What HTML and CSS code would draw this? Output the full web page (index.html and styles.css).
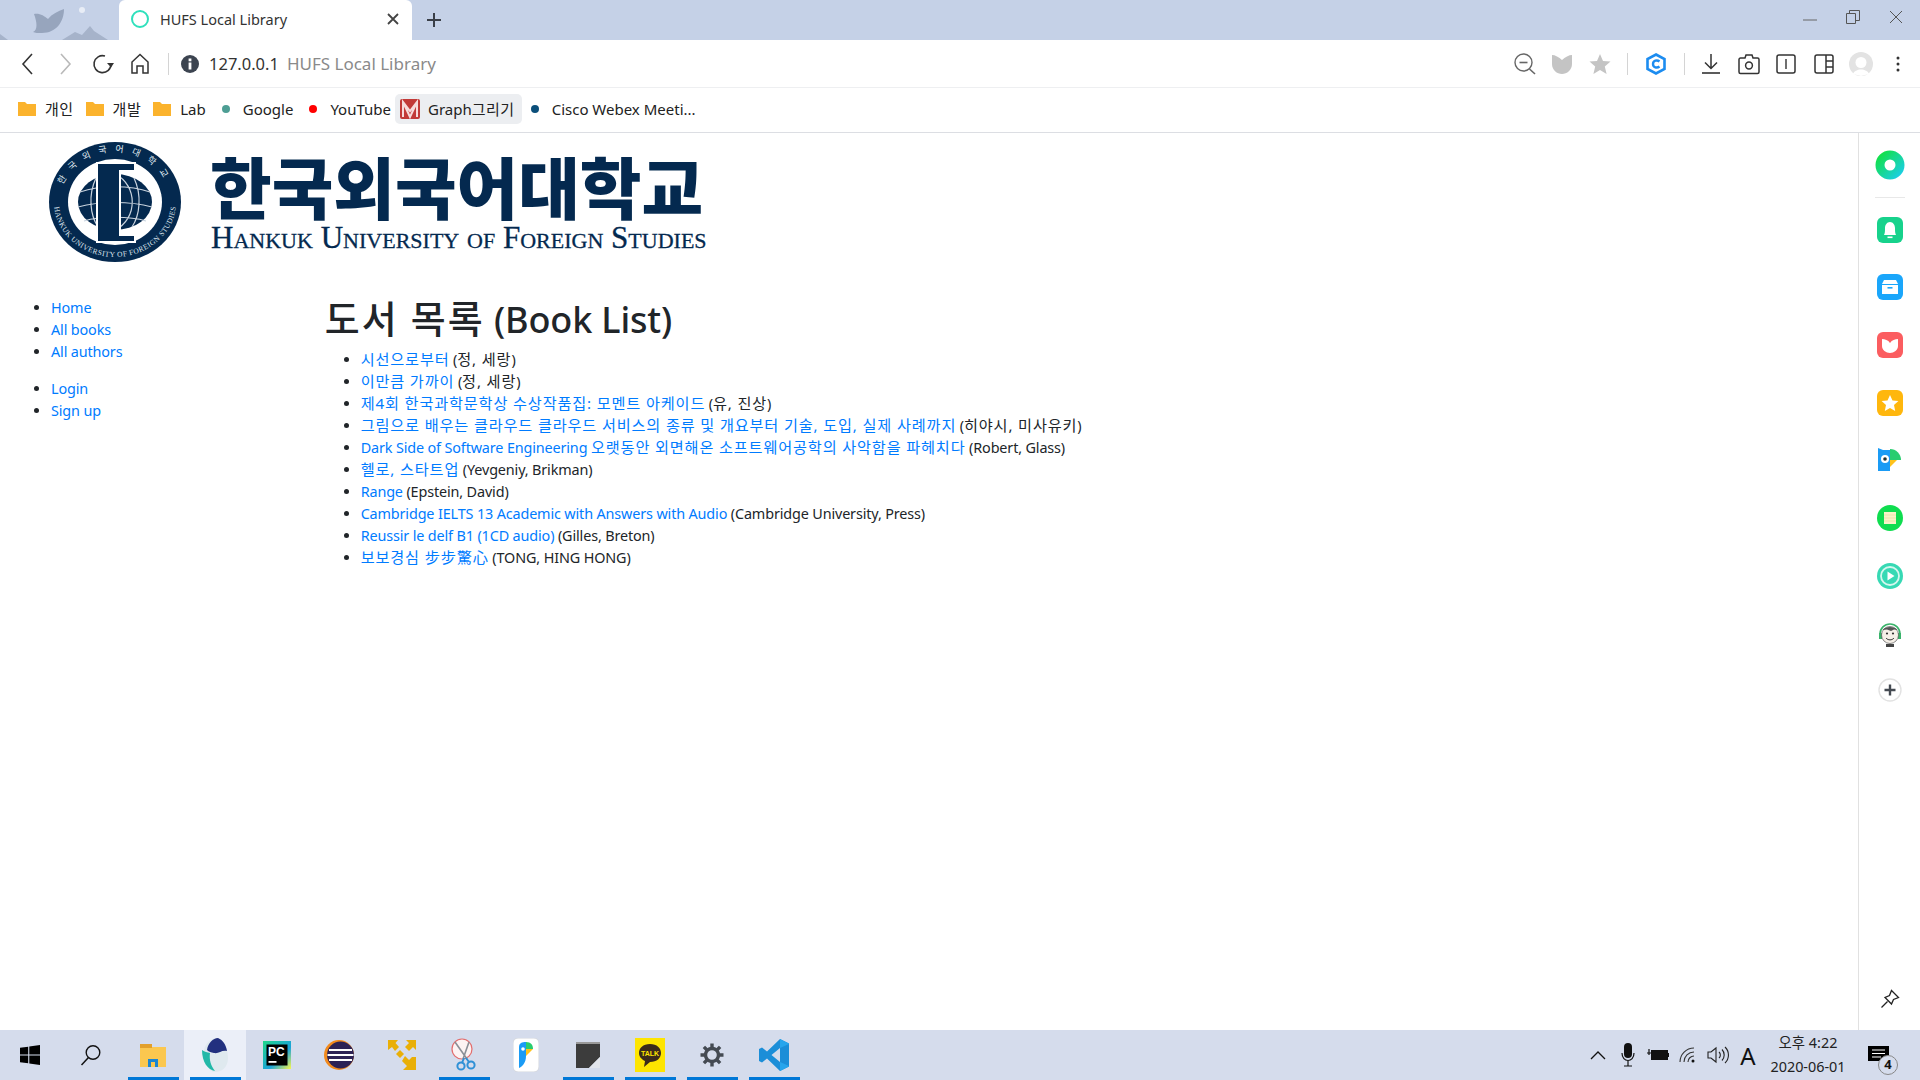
FILE: index.html
```html
<!DOCTYPE html>
<html lang="ko">
<head>
  <meta charset="UTF-8" />
  <title>HUFS Local Library</title>
  <link rel="stylesheet" href="styles.css">
</head>
<body>

  <!-- Title bar -->
  <div class="titlebar">
    <svg class="tab-art" width="119" height="40" viewBox="0 0 119 40">
      <path d="M34 14 C40 13 44 16 48 19 C52 14 58 11 64 9 C64 22 56 33 42 33 C38 33 35 33 33 32 C38 30 37 22 34 14Z" fill="#97a5bd"/>
      <circle cx="82" cy="10" r="3" fill="#e8edf6"/>
      <path d="M62 40 L75 32 L82 35 L90 26 L94 31 L108 40Z" fill="#a6b3ca"/>
      <path d="M0 34 L8 40 L0 40Z" fill="#a6b3ca"/>
    </svg>
    <div class="tab">
      <span class="tab-ring"></span>
      <span class="tab-title">HUFS Local Library</span>
      <svg class="tab-close" width="12" height="12" viewBox="0 0 12 12"><path d="M1 1 L11 11 M11 1 L1 11" stroke="#444" stroke-width="1.8"/></svg>
    </div>
    <svg class="tab-new" width="16" height="16" viewBox="0 0 16 16"><path d="M8 1 V15 M1 8 H15" stroke="#3a3f48" stroke-width="2"/></svg>
    <div class="window-controls">
      <svg width="16" height="16" viewBox="0 0 16 16"><path d="M1 11 H15" stroke="#666" stroke-width="1"/></svg>
      <svg width="16" height="16" viewBox="0 0 16 16"><path d="M1.5 4.5 H10.5 V14.5 H1.5Z M4.5 4 V1.5 H14.5 V11.5 H11" fill="none" stroke="#555" stroke-width="1"/></svg>
      <svg width="16" height="16" viewBox="0 0 16 16"><path d="M2 2 L14 14 M14 2 L2 14" stroke="#555" stroke-width="1"/></svg>
    </div>
  </div>

  <!-- Address bar -->
  <div class="addressbar">
    <div class="tool"><svg width="22" height="24" viewBox="0 0 22 24"><path d="M15 2 L6 12 L15 22" fill="none" stroke="#333" stroke-width="1.6"/></svg></div>
    <div class="tool"><svg width="22" height="24" viewBox="0 0 22 24"><path d="M7 2 L16 12 L7 22" fill="none" stroke="#b9b9b9" stroke-width="1.6"/></svg></div>
    <div class="tool"><svg width="22" height="22" viewBox="0 0 22 22"><path d="M19 11 A8.5 8.5 0 1 1 13 3" fill="none" stroke="#333" stroke-width="1.6"/><path d="M15 10 L22 10 L19 14.5Z" fill="#333"/></svg></div>
    <div class="tool"><svg width="20" height="22" viewBox="0 0 20 22"><path d="M2 20 V9 L10 1.5 L18 9 V20 H13 V13 H7 V20Z" fill="none" stroke="#333" stroke-width="1.5"/></svg></div>
    <span class="tool-sep first-sep"></span>
    <svg class="info-icon" width="18" height="18" viewBox="0 0 18 18"><circle cx="9" cy="9" r="9" fill="#3c4450"/><rect x="7.6" y="7.5" width="2.8" height="7" fill="#fff"/><rect x="7.6" y="3.5" width="2.8" height="2.8" fill="#fff"/></svg>
    <span class="url">127.0.0.1</span>
    <span class="url-title">HUFS Local Library</span>
    <div class="address-right">
      <div class="tool"><svg width="24" height="24" viewBox="0 0 24 24"><circle cx="10.5" cy="10.5" r="8.5" fill="none" stroke="#666" stroke-width="1.4"/><path d="M6.5 10.5 H14.5" stroke="#666" stroke-width="1.6"/><path d="M16.5 17 L22 22" stroke="#666" stroke-width="1.6"/></svg></div>
      <div class="tool"><svg width="22" height="22" viewBox="0 0 22 22"><path d="M1 2 C4 2 8 4 11 7 C14 4 18 2 21 2 V11 C21 17 16 21 11 21 C6 21 1 17 1 11Z" fill="#c4c4c4"/></svg></div>
      <div class="tool"><svg width="22" height="22" viewBox="0 0 22 22"><path d="M11 1 L14 8 L21.5 8.6 L15.8 13.6 L17.6 21 L11 17 L4.4 21 L6.2 13.6 L.5 8.6 L8 8Z" fill="#c4c4c4"/></svg></div>
      <span class="tool-sep sep-before"></span>
      <div class="tool tool-c"><svg width="20" height="22" viewBox="0 0 20 22"><path d="M10 1.5 L18.5 6 V16 L10 20.5 L1.5 16 V6Z" fill="none" stroke="#1c8cf0" stroke-width="2.6"/><path d="M13.5 8.5 C11 6.5 7 7.5 7 11 C7 14.5 11 15.5 13.5 13.5" fill="none" stroke="#1c8cf0" stroke-width="2.4"/></svg></div>
      <span class="tool-sep sep-after"></span>
      <div class="tool"><svg width="20" height="22" viewBox="0 0 20 22"><path d="M10 1 V15 M4 9.5 L10 15.5 L16 9.5" fill="none" stroke="#333" stroke-width="1.5"/><path d="M1 20 H19" stroke="#333" stroke-width="1.6"/></svg></div>
      <div class="tool"><svg width="22" height="22" viewBox="0 0 22 22"><path d="M2.5 5 H7 L8 2 H14 L15 5 H19.5 A1.5 1.5 0 0 1 21 6.5 V19 A1.5 1.5 0 0 1 19.5 20.5 H2.5 A1.5 1.5 0 0 1 1 19 V6.5 A1.5 1.5 0 0 1 2.5 5Z" fill="none" stroke="#333" stroke-width="1.5"/><circle cx="11" cy="12.5" r="3.4" fill="none" stroke="#333" stroke-width="1.5"/></svg></div>
      <div class="tool"><svg width="20" height="20" viewBox="0 0 20 20"><rect x="1" y="1" width="18" height="18" rx="2" fill="none" stroke="#333" stroke-width="1.5"/><path d="M10 5 V15" stroke="#333" stroke-width="1.4"/></svg></div>
      <div class="tool"><svg width="20" height="20" viewBox="0 0 20 20"><rect x="1" y="1" width="18" height="18" rx="2" fill="none" stroke="#333" stroke-width="1.5"/><path d="M12 1 V19 M12 7 H19 M12 13 H19" stroke="#333" stroke-width="1.5"/></svg></div>
      <div class="tool"><svg width="24" height="24" viewBox="0 0 24 24"><circle cx="12" cy="12" r="12" fill="#e3e3e3"/><circle cx="12" cy="10.5" r="5.5" fill="#fff"/><path d="M4 22 C6 16 18 16 20 22 L12 24Z" fill="#fff"/></svg></div>
      <div class="tool tool-dots"><svg width="4" height="18" viewBox="0 0 4 18"><circle cx="2" cy="3" r="1.5" fill="#333"/><circle cx="2" cy="9" r="1.5" fill="#333"/><circle cx="2" cy="15" r="1.5" fill="#333"/></svg></div>
    </div>
  </div>

  <!-- Bookmarks -->
  <div class="bookmarks">
    <div class="bookmark"><svg class="folder" width="18" height="15" viewBox="0 0 18 15"><path d="M0 1 H7 L9 3 H18 V15 H0Z" fill="#fbb32d"/></svg><span class="ko-tab">개인</span></div>
    <div class="bookmark"><svg class="folder" width="18" height="15" viewBox="0 0 18 15"><path d="M0 1 H7 L9 3 H18 V15 H0Z" fill="#fbb32d"/></svg><span class="ko-tab">개발</span></div>
    <div class="bookmark"><svg class="folder" width="18" height="15" viewBox="0 0 18 15"><path d="M0 1 H7 L9 3 H18 V15 H0Z" fill="#fbb32d"/></svg>Lab</div>
    <div class="bookmark bookmark-link"><span class="dot dot-google"></span>Google</div>
    <div class="bookmark bookmark-link"><span class="dot dot-youtube"></span>YouTube</div>
    <div class="bookmark bookmark-active">
      <svg width="20" height="20" viewBox="0 0 20 20"><rect width="20" height="20" rx="2" fill="#c23a38"/><path d="M3 18 V3 L10 12 L17 3 V18 M3 3 L10 18 L17 3" fill="none" stroke="#f6dcdc" stroke-width="2"/></svg>
      <span>Graph<span class="ko-tab">그리기</span></span>
    </div>
    <div class="bookmark bookmark-link"><span class="dot dot-cisco"></span>Cisco Webex Meeti...</div>
  </div>

  <div class="browser-body">
    <div class="page">
      <div class="logo">
        <svg class="seal" width="170" height="135" viewBox="0 0 170 135">
          <defs>
            <path id="sealTop" d="M30 67 A55 50 0 0 1 140 67"/>
            <path id="sealBottom" d="M24 67 A61 55 0 0 0 146 67"/>
          </defs>
          <ellipse cx="85" cy="67" rx="66" ry="60" fill="#04294f"/>
          <ellipse cx="85" cy="67" rx="47" ry="43" fill="#fff"/>
          <ellipse cx="85" cy="67" rx="37" ry="28" fill="#04294f"/>
          <path d="M85 39 C62 50 62 84 85 95 M85 39 C108 50 108 84 85 95 M50 57 C70 50 100 50 120 57 M48 72 C70 66 100 66 122 72 M54 86 C70 81 100 81 116 86 M66 43 C58 60 60 80 68 92 M104 43 C112 60 110 80 102 92" fill="none" stroke="#c9d3de" stroke-width="1.2"/>
          <path d="M67 28 H105 V36 H90 V100 H105 V107 H67Z" fill="#04294f" stroke="#fff" stroke-width="2"/>
          <text class="seal-kr"><textPath href="#sealTop" startOffset="50%" text-anchor="middle">한국외국어대학교</textPath></text>
          <text class="seal-en"><textPath href="#sealBottom" startOffset="50%" text-anchor="middle" textLength="172">HANKUK UNIVERSITY OF FOREIGN STUDIES</textPath></text>
        </svg>
        <div class="wordmark">
          <div class="wordmark-kr">한국외국어대학교</div>
          <div class="wordmark-en">Hankuk University of Foreign Studies</div>
        </div>
      </div>

      <div class="row">
        <div class="side-col">
          <ul>
            <li><a href="#">Home</a></li>
            <li><a href="#">All books</a></li>
            <li><a href="#">All authors</a></li>
          </ul>
          <ul>
            <li><a href="#">Login</a></li>
            <li><a href="#">Sign up</a></li>
          </ul>
        </div>
        <div class="content-col">
          <h1><span class="ko">도서 목록</span> (Book List)</h1>
          <ul>
            <li><a href="#"><span class="ko">시선으로부터</span></a> (<span class="ko">정, 세랑</span>)</li>
            <li><a href="#"><span class="ko">이만큼 가까이</span></a> (<span class="ko">정, 세랑</span>)</li>
            <li><a href="#"><span class="ko">제4회 한국과학문학상 수상작품집: 모멘트 아케이드</span></a> (<span class="ko">유, 진상</span>)</li>
            <li><a href="#"><span class="ko">그림으로 배우는 클라우드 클라우드 서비스의 종류 및 개요부터 기술, 도입, 실제 사례까지</span></a> (<span class="ko">히야시, 미사유키</span>)</li>
            <li><a href="#">Dark Side of Software Engineering <span class="ko">오랫동안 외면해온 소프트웨어공학의 사악함을 파헤치다</span></a> (Robert, Glass)</li>
            <li><a href="#"><span class="ko">헬로, 스타트업</span></a> (Yevgeniy, Brikman)</li>
            <li><a href="#">Range</a> (Epstein, David)</li>
            <li><a href="#">Cambridge IELTS 13 Academic with Answers with Audio</a> (Cambridge University, Press)</li>
            <li><a href="#">Reussir le delf B1 (1CD audio)</a> (Gilles, Breton)</li>
            <li><a href="#"><span class="ko">보보경심 步步驚心</span></a> (TONG, HING HONG)</li>
          </ul>
        </div>
      </div>
    </div>

    <!-- Side rail -->
    <div class="rail">
      <svg class="rail-icon rail-first" width="30" height="30" viewBox="0 0 30 30"><defs><linearGradient id="ringGrad" x1="0" y1="0" x2="1" y2="1"><stop offset="0" stop-color="#12e04a"/><stop offset="1" stop-color="#1bcfe0"/></linearGradient></defs><circle cx="15" cy="15" r="10" fill="none" stroke="url(#ringGrad)" stroke-width="9"/></svg>
      <div class="rail-divider"></div>
      <svg class="rail-icon" width="26" height="26" viewBox="0 0 26 26"><rect width="26" height="26" rx="6" fill="#17d28c"/><path d="M7 18 C8 16 8 14 8 11 C8 8 10 5 13 5 C16 5 18 8 18 11 C18 14 18 16 19 18Z" fill="#fff"/><rect x="10.5" y="19.5" width="5" height="1.6" fill="#fff"/></svg>
      <svg class="rail-icon" width="26" height="26" viewBox="0 0 26 26"><rect width="26" height="26" rx="6" fill="#1aa6fb"/><path d="M7 6 H19 L21 10 H5Z M5 11 H21 V20 H5Z" fill="#fff"/><rect x="10.5" y="13" width="5" height="1.6" fill="#1aa6fb"/></svg>
      <svg class="rail-icon" width="26" height="26" viewBox="0 0 26 26"><rect width="26" height="26" rx="6" fill="#fb5d60"/><path d="M5 7 C8 7 11 8 13 11 C15 8 18 7 21 7 V14 C21 18 17 21 13 21 C9 21 5 18 5 14Z" fill="#fff"/></svg>
      <svg class="rail-icon" width="26" height="26" viewBox="0 0 26 26"><rect width="26" height="26" rx="6" fill="#ffb70d"/><path d="M13 5 L15.5 10.4 L21.4 11 L17 15 L18.2 21 L13 18 L7.8 21 L9 15 L4.6 11 L10.5 10.4Z" fill="#fff"/></svg>
      <svg class="rail-icon" width="26" height="26" viewBox="0 0 26 26"><path d="M1 1 L6 3 H13 V24 H1Z" fill="#1a9bf5"/><path d="M13 2 A11 11 0 0 1 24 13 H13Z" fill="#29cd6f"/><path d="M13 13 H22 A10 10 0 0 1 13 22Z" fill="#fff"/><path d="M13 13 H20 L13 20Z" fill="#ffc21a"/><circle cx="8" cy="12" r="4" fill="#fff"/><circle cx="8" cy="12" r="1.8" fill="#233"/></svg>
      <svg class="rail-icon" width="26" height="26" viewBox="0 0 26 26"><circle cx="13" cy="13" r="13" fill="#0fdd4f"/><rect x="7" y="7" width="12" height="12" fill="#f8f3c8"/><path d="M7 10 H19 M7 13 H19 M7 16 H19" stroke="#e8dfa0" stroke-width=".7"/></svg>
      <svg class="rail-icon" width="26" height="26" viewBox="0 0 26 26"><circle cx="13" cy="13" r="13" fill="#37d9b4"/><circle cx="13" cy="13" r="9" fill="none" stroke="#d5f7ee" stroke-width="1.8"/><path d="M10.5 8.5 L17.5 13 L10.5 17.5Z" fill="#fff"/></svg>
      <svg class="rail-icon" width="26" height="26" viewBox="0 0 26 26"><path d="M3 13 A10 10 0 0 1 23 13" fill="none" stroke="#39b36a" stroke-width="1.6"/><rect x="2" y="12" width="3" height="6" fill="#39b36a"/><rect x="21" y="12" width="3" height="6" fill="#39b36a"/><circle cx="13" cy="14" r="8.5" fill="#f6f0e8" stroke="#555" stroke-width=".7"/><path d="M5.5 9 C8 5 18 5 20.5 9 L17 8.5 L14 10 L10 8.5Z" fill="#555"/><circle cx="10" cy="12.5" r="1.1" fill="#333"/><circle cx="16" cy="12.5" r="1.1" fill="#333"/><path d="M9 17 C11 19.5 15 19.5 17 17" fill="none" stroke="#333"/><path d="M9 23 H17 V26 H9Z" fill="#444"/></svg>
      <svg class="rail-icon" width="24" height="24" viewBox="0 0 24 24"><circle cx="12" cy="12" r="11" fill="#fff" stroke="#e2e2e2" stroke-width="1.4"/><path d="M12 6.5 V17.5 M6.5 12 H17.5" stroke="#444a52" stroke-width="2.4"/></svg>
      <svg class="rail-pin" width="20" height="20" viewBox="0 0 20 20"><path d="M11.5 1.5 L18.5 8.5 L13.5 10.5 L11.5 15 L5 8.5 L9.5 6.5Z M7.5 12.5 L1.5 18.5" fill="none" stroke="#222" stroke-width="1.3"/></svg>
    </div>
  </div>

  <!-- Windows taskbar -->
  <div class="taskbar">
    <div class="task task-start"><svg width="20" height="20" viewBox="0 0 20 20"><path d="M0 2.8 L8.2 1.7 V9.5 H0Z M9.3 1.5 L20 0 V9.5 H9.3Z M0 10.5 H8.2 V18.3 L0 17.2Z M9.3 10.5 H20 V20 L9.3 18.5Z" fill="#000"/></svg></div>
    <div class="task task-search"><svg width="22" height="22" viewBox="0 0 22 22"><circle cx="13" cy="8.5" r="6.8" fill="none" stroke="#111" stroke-width="1.4"/><path d="M8.5 13.5 L1.5 21" stroke="#111" stroke-width="1.5"/></svg></div>
    <div class="task task-open"><svg width="26" height="24" viewBox="0 0 26 24"><path d="M0 1 H10 L12 4 H26 V24 H0Z" fill="#fbc74f"/><rect x="0" y="1" width="12" height="4" fill="#e3a02b"/><path d="M8 24 V16 H18 V24 H15 V19 H11 V24Z" fill="#1c86d1"/></svg></div>
    <div class="task task-open task-active"><svg width="28" height="34" viewBox="0 0 28 34"><path d="M3 16 C2 7 9 0 17 0 C24 3 27 12 27 20 C27 29 21 34 14 34 C8 34 4 26 3 16Z" fill="#dfe9ef"/><path d="M6 12 C7 5 12 0 17 0 C22 2 25 7 26 13 C20 12 18 16 13 15 C10 14 8 14 6 12Z" fill="#22307f"/><path d="M1 12 C4 14 6 14 9 15 C8 22 10 28 14 33 C7 32 1 24 1 12Z" fill="#22b8a8"/></svg></div>
    <div class="task"><svg width="28" height="28" viewBox="0 0 28 28"><defs><linearGradient id="pcGrad" x1="0" y1="0" x2="1" y2="1"><stop offset="0" stop-color="#20d789"/><stop offset=".6" stop-color="#1aa3d9"/><stop offset="1" stop-color="#fcf84a"/></linearGradient></defs><rect width="28" height="28" fill="url(#pcGrad)"/><rect x="3.5" y="3.5" width="21" height="21" fill="#000"/><text class="pc-text" x="5" y="15">PC</text><rect x="5.5" y="20" width="8" height="1.8" fill="#fff"/></svg></div>
    <div class="task"><svg width="30" height="30" viewBox="0 0 30 30"><circle cx="15" cy="15" r="15" fill="#f28a1c"/><circle cx="16.5" cy="15" r="13.5" fill="#2c2255"/><path d="M5 10 H28 M3.5 15 H29.5 M5 20 H28" stroke="#fff" stroke-width="2.2"/></svg></div>
    <div class="task"><svg width="30" height="32" viewBox="0 0 30 32"><path d="M1 1 H11 L8.5 4 L12 8 L8 12 L5 8 L1 11Z M29 1 V11 L26 8 L22 12 L18 8 L22 4 L19 1Z M13 11 L17 15 L13 19 L9 15Z M18 17 L22 21 L25 18 L29 18 V31 H16 L20 27 L15 22Z" fill="#e9af07"/></svg></div>
    <div class="task task-open"><svg width="30" height="34" viewBox="0 0 30 34"><circle cx="13" cy="11" r="10" fill="#fdf3f3" stroke="#e26d6d" stroke-width="1.2"/><path d="M6 4 L18 21 M20 4 L14 21" stroke="#8b8f96" stroke-width="1.6"/><circle cx="12" cy="28" r="3.6" fill="none" stroke="#2e90d6" stroke-width="2"/><circle cx="22" cy="27" r="3.6" fill="none" stroke="#2e90d6" stroke-width="2"/><path d="M15 20 L13 25 M17 20 L20 24" stroke="#2e90d6" stroke-width="2"/></svg></div>
    <div class="task"><svg width="26" height="34" viewBox="0 0 26 34"><rect width="26" height="34" rx="5" fill="#fff" stroke="#d2d6dd"/><path d="M6 30 V9 C6 5 9 4 13 4 V18 C13 24 10 28 6 30Z" fill="#1a9bf5"/><path d="M13 4 C18 4 20 7 20 11 H13Z" fill="#29cd6f"/><path d="M13 11 H20 L13 18Z" fill="#ffc21a"/><circle cx="10" cy="11" r="1.8" fill="#fff"/></svg></div>
    <div class="task task-open"><svg width="24" height="26" viewBox="0 0 24 26"><path d="M0 0 H24 V15 L13 26 H0Z" fill="#3c3c3c"/><path d="M0 0 H24 V2 H0Z" fill="#999"/><path d="M24 15 V26 H13Z" fill="#e2e5ec"/></svg></div>
    <div class="task task-open"><svg width="30" height="34" viewBox="0 0 30 34"><rect width="30" height="34" fill="#fee500"/><path d="M15 6 C8 6 4 10 4 15 C4 19 7 21.5 10 23 L9 29 L15 24 C22 24 26 20 26 15 C26 10 22 6 15 6Z" fill="#3b2b1b"/><text class="talk-text" x="15" y="18" text-anchor="middle">TALK</text></svg></div>
    <div class="task task-open"><svg width="24" height="24" viewBox="0 0 24 24"><circle cx="12" cy="12" r="6.5" fill="none" stroke="#444a52" stroke-width="3.4"/><path d="M12 0.5 V5 M12 19 V23.5 M0.5 12 H5 M19 12 H23.5 M3.9 3.9 L7 7 M17 17 L20.1 20.1 M3.9 20.1 L7 17 M17 7 L20.1 3.9" stroke="#444a52" stroke-width="3.4"/></svg></div>
    <div class="task task-open"><svg width="30" height="32" viewBox="0 0 30 32"><path d="M21 0 L30 4.5 V27.5 L21 32 L8 19.5 L3 23.5 L0 22 V10 L3 8.5 L8 12.5Z M21 9 L12.5 16 L21 23Z" fill="#1b8ed8"/><path d="M21 0 L30 4.5 V27.5 L21 32Z M21 9 V23 L30 27 V5Z" fill="#27a5ec"/></svg></div>

    <div class="tray">
      <div class="tray-item"><svg width="16" height="10" viewBox="0 0 16 10"><path d="M1 9 L8 2 L15 9" fill="none" stroke="#111" stroke-width="1.3"/></svg></div>
      <div class="tray-item"><svg width="14" height="24" viewBox="0 0 14 24"><rect x="3" y="0" width="8" height="15" rx="4" fill="#111"/><path d="M1 10 C1 20 13 20 13 10 M7 18 V23 M3 23 H11" fill="none" stroke="#111" stroke-width="1.2"/></svg></div>
      <div class="tray-item"><svg width="22" height="14" viewBox="0 0 22 14"><rect x="4.5" y="2.5" width="16" height="9" fill="#111" stroke="#111"/><rect x="20.5" y="5" width="1.5" height="4" fill="#111"/><path d="M0 5 H4 M2 1 V7" stroke="#111" stroke-width="1.2"/></svg></div>
      <div class="tray-item"><svg width="18" height="16" viewBox="0 0 18 16"><path d="M1 15 A14 14 0 0 1 15 1 M5 15 A10 10 0 0 1 15 5 M9 15 A6 6 0 0 1 15 9" fill="none" stroke="#333" stroke-width="1.1"/><circle cx="14" cy="14" r="1.5" fill="#111"/></svg></div>
      <div class="tray-item"><svg width="22" height="18" viewBox="0 0 22 18"><path d="M1 6 H4 L9 2 V16 L4 12 H1Z" fill="none" stroke="#222" stroke-width="1.1"/><path d="M12 6 A4 4 0 0 1 12 12 M15 3.5 A8 8 0 0 1 15 14.5 M18 1 A11 11 0 0 1 18 17" fill="none" stroke="#222" stroke-width="1.1"/></svg></div>
      <div class="tray-item tray-ime">A</div>
      <div class="clock">
        <div>오후 4:22</div>
        <div>2020-06-01</div>
      </div>
      <div class="notify">
        <svg width="21" height="18" viewBox="0 0 21 18"><path d="M0 0 H21 V15 H0Z" fill="#000"/><path d="M4 4 H17 M4 7.5 H17 M4 11 H13" stroke="#fff" stroke-width="1.2"/></svg>
        <span class="notify-badge">4</span>
      </div>
    </div>
  </div>

</body>
</html>
```

FILE: styles.css
```css
html, body {
  margin: 0;
  padding: 0;
  height: 100%;
  overflow: hidden;
}

body {
  display: flex;
  flex-direction: column;
  height: 1080px;
  background: #fff;
  font-family: "Noto Sans", "Noto Sans CJK KR", sans-serif;
  color: #212529;
}

svg {
  display: block;
  flex: none;
}

/* Title bar */
.titlebar {
  display: flex;
  align-items: center;
  height: 40px;
  background: #c5d1e7;
  flex: none;
}

.tab {
  display: flex;
  align-items: center;
  width: 293px;
  height: 40px;
  box-sizing: border-box;
  padding: 0 13px 2px 12px;
  background: #fff;
  border-radius: 6px 6px 0 0;
  font-size: 14.5px;
  color: #333;
}

.tab-ring {
  width: 18px;
  height: 18px;
  box-sizing: border-box;
  border: 2.5px solid #2fe0bc;
  border-radius: 50%;
}

.tab-title {
  margin-left: 11px;
  flex: 1;
}

.tab-new {
  margin-left: 14px;
}

.window-controls {
  display: flex;
  gap: 27px;
  margin-left: auto;
  margin-right: 16px;
  margin-top: -7px;
}

/* Address bar */
.addressbar {
  display: flex;
  align-items: center;
  height: 48px;
  padding-left: 9px;
  border-bottom: 1px solid #eeeff1;
  flex: none;
  box-sizing: border-box;
  font-size: 16.5px;
}

.tool {
  display: flex;
  align-items: center;
  justify-content: center;
  width: 37.5px;
  height: 40px;
  flex: none;
}

.tool-sep {
  width: 1px;
  height: 22px;
  background: #d4d4d4;
  flex: none;
}

.first-sep {
  margin: 0 12px 0 9px;
}

.sep-before {
  margin-left: 8px;
}

.sep-after {
  margin-right: 8px;
}

.url {
  margin-left: 10px;
  color: #333;
}

.url-title {
  margin-left: 8px;
  font-size: 17px;
  color: #8a8a8a;
}

.address-right {
  display: flex;
  align-items: center;
  margin-left: auto;
  padding-right: 4px;
}

.tool-c {
  width: 56px;
}

.tool-dots {
  width: 36px;
}

/* Bookmarks */
.bookmarks {
  display: flex;
  align-items: center;
  height: 45px;
  padding: 0 0 3px 18px;
  border-bottom: 1px solid #dcdee3;
  box-sizing: border-box;
  flex: none;
  font-size: 15px;
  color: #222;
}

.ko-tab {
  letter-spacing: .5px;
}

.bookmark {
  display: flex;
  align-items: center;
  gap: 9px;
  margin-right: 12px;
}

.bookmark-link {
  gap: 13px;
  margin-left: 4px;
}

.dot {
  width: 8px;
  height: 8px;
  border-radius: 50%;
}

.dot-google { background: #4d9e94; }
.dot-youtube { background: #f00; }
.dot-cisco { background: #0b4f7a; }

.bookmark-active {
  gap: 8px;
  height: 30px;
  padding: 0 7px 0 5px;
  margin: 0 5px 0 -8px;
  background: #eceef1;
  border-radius: 5px;
}

/* Page */
.browser-body {
  display: flex;
  flex: 1;
  min-height: 0;
}

.page {
  flex: 1;
  min-width: 0;
  font-size: 14.4px;
  line-height: 22px;
  letter-spacing: -.14px;
}

.ko {
  font-size: 1.055em;
  line-height: 1;
  letter-spacing: .055em;
}

.logo {
  display: flex;
  gap: 10px;
  padding: 2px 0 0 30px;
}

.wordmark {
  padding-top: 14px;
  color: #04294f;
}

.wordmark-kr {
  font-family: "Noto Sans CJK KR", sans-serif;
  font-size: 67px;
  font-weight: 900;
  line-height: 72px;
  letter-spacing: 0;
  white-space: nowrap;
}

.wordmark-en {
  margin-left: 1px;
  font-family: "Liberation Serif", serif;
  font-size: 31.1px;
  font-variant: small-caps;
  line-height: 34px;
  letter-spacing: 0;
  white-space: nowrap;
  -webkit-text-stroke: .3px #04294f;
}

.seal-kr {
  font-family: "Noto Sans CJK KR", sans-serif;
  font-size: 9px;
  letter-spacing: 8px;
  fill: #dfe6ee;
}

.seal-en {
  font-family: "Liberation Serif", serif;
  font-size: 7.5px;
  letter-spacing: 0;
  fill: #dfe6ee;
}

.row {
  display: grid;
  grid-template-columns: 2fr 10fr;
  margin-top: 27px;
}

.side-col,
.content-col {
  padding: 0 15px;
}

.row ul {
  margin: 0 0 14.5px;
  padding-left: 36px;
}

.row a {
  color: #007bff;
  text-decoration: none;
}

h1 {
  margin: 1px 0 8px;
  font-size: 36px;
  font-weight: 500;
  line-height: 43px;
}

/* Right rail */
.rail {
  display: flex;
  flex-direction: column;
  align-items: center;
  width: 62px;
  box-sizing: border-box;
  border-left: 1px solid #e1e1e1;
  flex: none;
}

.rail-icon {
  margin-top: 31.7px;
}

.rail-first {
  margin-top: 17px;
}

.rail-divider {
  width: 30px;
  height: 1px;
  margin: 17px 0 -13px;
  background: #e8e8e8;
}

.rail-pin {
  margin-top: auto;
  margin-bottom: 21px;
}

/* Taskbar */
.taskbar {
  display: flex;
  align-items: center;
  height: 50px;
  background: #d5dcec;
  flex: none;
}

.task {
  position: relative;
  display: flex;
  align-items: center;
  justify-content: center;
  width: 62.1px;
  height: 50px;
  flex: none;
}

.task-start {
  width: 60px;
}

.task-open::after {
  content: "";
  position: absolute;
  left: 6px;
  right: 5px;
  bottom: 0;
  height: 3px;
  background: #0078d7;
}

.task-active {
  background: #ebeff8;
}

.pc-text {
  font-family: "Liberation Sans", sans-serif;
  font-size: 12px;
  font-weight: 700;
  fill: #fff;
}

.talk-text {
  font-family: "Liberation Sans", sans-serif;
  font-size: 7px;
  font-weight: 700;
  fill: #fee500;
}

.tray {
  display: flex;
  align-items: center;
  height: 50px;
  margin-left: auto;
  padding-right: 11px;
}

.tray-item {
  display: flex;
  align-items: center;
  justify-content: center;
  width: 30px;
  height: 50px;
}

.tray-ime {
  font-size: 24px;
  color: #111;
}

.clock {
  width: 90px;
  font-size: 14.4px;
  line-height: 24px;
  text-align: center;
  color: #222;
}

.notify {
  position: relative;
  display: flex;
  justify-content: center;
  width: 56px;
}

.notify svg {
  margin-left: -6px;
}

.notify-badge {
  position: absolute;
  left: 25px;
  top: 9px;
  width: 20px;
  height: 20px;
  box-sizing: border-box;
  border: 1.5px solid #888;
  border-radius: 50%;
  background: #d5dcec;
  font-size: 13px;
  font-weight: 700;
  line-height: 17px;
  text-align: center;
  color: #111;
}
```
